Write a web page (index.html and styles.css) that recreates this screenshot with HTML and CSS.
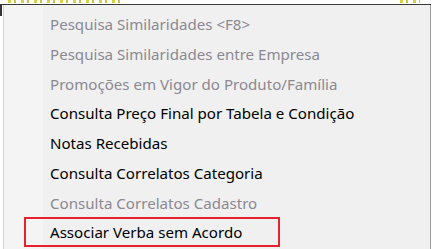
FILE: index.html
```html
<!DOCTYPE html>
<html lang="pt">
<head>
<meta charset="utf-8">
<title>Menu</title>
<link rel="stylesheet" href="styles.css">
</head>
<body>
<div class="backdrop">
  <div class="strip">
    <span class="ticks ticks-left"></span>
    <span class="ticks ticks-right"></span>
  </div>
  <div class="frame">
    <span class="caret"></span>
    <ul class="menu">
      <li class="item disabled">Pesquisa Similaridades &lt;F8&gt;</li>
      <li class="item disabled">Pesquisa Similaridades entre Empresa</li>
      <li class="item disabled">Promoções em Vigor do Produto/Família</li>
      <li class="item">Consulta Preço Final por Tabela e Condição</li>
      <li class="item">Notas Recebidas</li>
      <li class="item">Consulta Correlatos Categoria</li>
      <li class="item disabled">Consulta Correlatos Cadastro</li>
      <li class="item marked">Associar Verba sem Acordo</li>
    </ul>
  </div>
</div>
</body>
</html>
```
FILE: styles.css
```css
html, body {
  margin: 0;
  padding: 0;
  background: #ffffff;
  overflow: hidden;
}

.backdrop {
  width: 434px;
  height: 249px;
  display: flex;
  flex-direction: column;
}

.strip {
  height: 4px;
  display: flex;
  align-items: flex-start;
}

.ticks {
  display: block;
  height: 3px;
  background: repeating-linear-gradient(90deg, #d8d040 0 3px, #ffffff 3px 6px, #c9c24a 6px 8px, #ffffff 8px 13px);
}

.ticks-left {
  margin-left: 8px;
  width: 112px;
}

.ticks-right {
  margin-left: auto;
  margin-right: 14px;
  width: 20px;
}

.frame {
  flex: 1;
  display: flex;
  border-top: 1px solid #3a3a3a;
  margin-right: 3px;
}

.caret {
  width: 2px;
  height: 11px;
  background: #333;
  margin-right: 1px;
}

.menu {
  list-style: none;
  margin: 0;
  padding: 3px 0 0 0;
  flex: 1;
  background: linear-gradient(90deg, #f4f4f4 0 39px, #f0f0f0 39px);
  border-left: 1px solid #d4d4d4;
  border-right: 1px solid #9a9a9a;
  font-family: "Noto Sans", "Open Sans", sans-serif;
  font-size: 15.1px;
  color: #000;
}

.item {
  box-sizing: border-box;
  height: 29.8px;
  line-height: 25.8px;
  padding-top: 4px;
  padding-left: 46px;
  white-space: nowrap;
}

.item.disabled {
  color: #8b8892;
}

.item.marked {
  margin-left: 20px;
  width: 256px;
  height: 30px;
  line-height: 25px;
  padding-top: 1px;
  border: 2px solid #e5222e;
  padding-left: 24px;
}
```
